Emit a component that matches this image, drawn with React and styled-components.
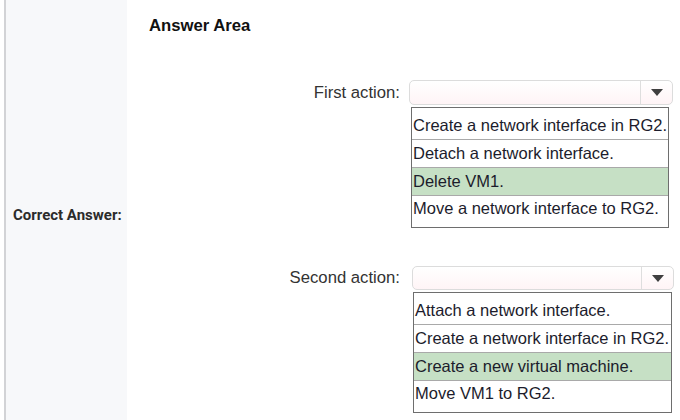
import React from "react";
import styled, { createGlobalStyle } from "styled-components";

const Global = createGlobalStyle`
  html, body { margin: 0; padding: 0; background: #fff; }
  body { font-family: "Liberation Sans", Arial, sans-serif; }
`;

const Page = styled.div`
  width: 680px;
  height: 420px;
  display: grid;
  grid-template-columns: 4px 2px 121px 1fr;
  overflow: hidden;
`;

const Gap = styled.div`
  background: #fff;
`;

const Rule = styled.div`
  background: #d2d3d6;
`;

const Side = styled.div`
  background: #f7f8fa;
  display: flex;
  align-items: center;
  padding-left: 7px;
  padding-top: 10px;
`;

const SideLabel = styled.div`
  font-family: Roboto, "Liberation Sans", sans-serif;
  font-weight: 700;
  font-size: 15px;
  color: #2b2b2b;
  white-space: nowrap;
`;

const Content = styled.div`
  padding: 16px 0 0 22px;
  display: flex;
  flex-direction: column;
`;

const Heading = styled.div`
  font-weight: 700;
  font-size: 16.7px;
  line-height: 20px;
  color: #111;
  margin-bottom: 44px;
`;

const Action = styled.div`
  display: grid;
  grid-template-columns: ${(p) => p.$labelWidth}px ${(p) => p.$width}px;
  column-gap: ${(p) => p.$gap}px;
  align-items: start;
  margin-bottom: ${(p) => p.$mb || 0}px;
`;

const Label = styled.div`
  font-size: 16.7px;
  color: #333;
  text-align: right;
  height: ${(p) => p.$h}px;
  display: flex;
  align-items: center;
  justify-content: flex-end;
  white-space: nowrap;
`;

const Dropdown = styled.div`
  display: flex;
  flex-direction: column;
`;

const Select = styled.div`
  height: ${(p) => p.$h}px;
  box-sizing: border-box;
  border: 1px solid #dcdcdc;
  border-radius: 5px;
  background: linear-gradient(#fff, #fff4f6);
  display: flex;
  justify-content: flex-end;
`;

const ArrowBox = styled.div`
  width: 31px;
  border-left: 1px solid #dedede;
  display: flex;
  align-items: center;
  justify-content: center;
`;

const List = styled.div`
  margin: 2px 0 0 ${(p) => p.$indent}px;
  width: ${(p) => p.$w}px;
  box-sizing: border-box;
  border: 1px solid #6e6e6e;
  background: #fff;
`;

const Item = styled.div`
  font-size: 16.5px;
  line-height: 27px;
  height: 27px;
  padding-left: 1px;
  color: #1c1c2c;
  white-space: nowrap;
  background: ${(p) => (p.$selected ? "#c6e0c5" : "#fff")};
  border-bottom: 1px solid #a9a9a9;
  &:first-child {
    padding-top: 4px;
  }
  &:last-child {
    border-bottom: none;
    height: 31px;
    line-height: 24px;
  }
`;

const Arrow = () => (
  <svg width="12" height="7" viewBox="0 0 12 7">
    <path d="M0 0 H12 L6 7 Z" fill="#3f3f3f" />
  </svg>
);

const actions = [
  {
    label: "First action:",
    labelWidth: 251,
    gap: 9,
    width: 264,
    selH: 25,
    indent: 2,
    listW: 258,
    mb: 38,
    items: [
      "Create a network interface in RG2.",
      "Detach a network interface.",
      "Delete VM1.",
      "Move a network interface to RG2.",
    ],
    selected: 2,
  },
  {
    label: "Second action:",
    labelWidth: 251,
    gap: 12,
    width: 262,
    selH: 24,
    indent: 1,
    listW: 259,
    items: [
      "Attach a network interface.",
      "Create a network interface in RG2.",
      "Create a new virtual machine.",
      "Move VM1 to RG2.",
    ],
    selected: 2,
  },
];

export default function App() {
  return (
    <>
      <Global />
      <Page>
        <Gap />
        <Rule />
        <Side>
          <SideLabel>Correct Answer:</SideLabel>
        </Side>
        <Content>
          <Heading>Answer Area</Heading>
          {actions.map((a) => (
            <Action
              key={a.label}
              $labelWidth={a.labelWidth}
              $gap={a.gap}
              $width={a.width}
              $mb={a.mb}
            >
              <Label $h={a.selH}>{a.label}</Label>
              <Dropdown>
                <Select $h={a.selH}>
                  <ArrowBox>
                    <Arrow />
                  </ArrowBox>
                </Select>
                <List $indent={a.indent} $w={a.listW}>
                  {a.items.map((it, i) => (
                    <Item key={it} $selected={i === a.selected}>
                      {it}
                    </Item>
                  ))}
                </List>
              </Dropdown>
            </Action>
          ))}
        </Content>
      </Page>
    </>
  );
}
